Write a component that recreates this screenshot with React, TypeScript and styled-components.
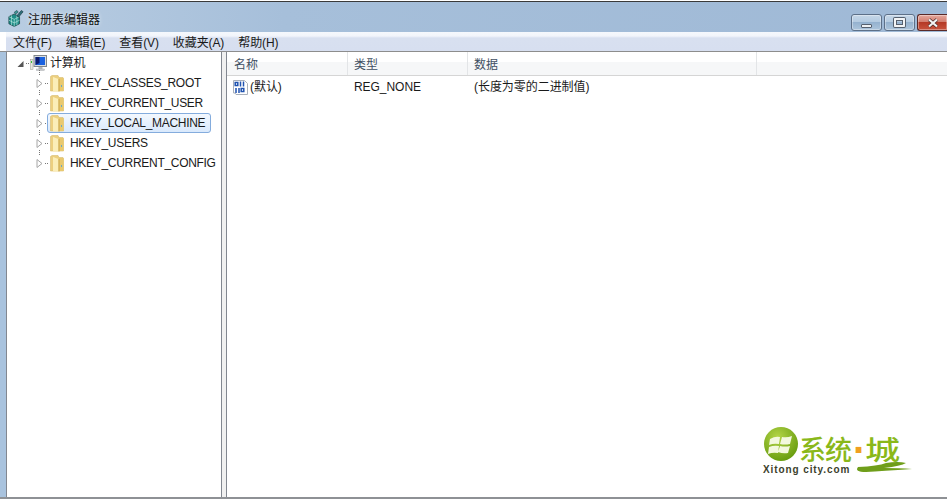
import React from 'react';
import styled, { createGlobalStyle } from 'styled-components';

const Global = createGlobalStyle`
  html, body { margin: 0; padding: 0; background: #fff; overflow: hidden; }
  * { box-sizing: border-box; }
`;

const fontStack = `"Liberation Sans", "Noto Sans CJK SC", sans-serif`;

const Win = styled.div`
  width: 947px;
  height: 499px;
  display: flex;
  flex-direction: column;
  font-family: ${fontStack};
  font-size: 12px;
  color: #1a1a1a;
  background: #fff;
`;

const TitleBar = styled.div`
  height: 31px;
  flex: none;
  padding: 2px 0 0 8px;
  display: flex;
  align-items: center;
  background: linear-gradient(90deg, #b9cde2 0, #a6bfda 30%, #9fb9d6 100%);
  border-top: 1px solid #3a3a3a;
  margin-top: 1px;
`;

const AppTitle = styled.span`
  margin-left: 4px;
  font-size: 12px;
  color: #111;
  text-shadow: 0 0 4px rgba(255, 255, 255, 0.8);
`;

const Buttons = styled.div`
  margin-left: auto;
  display: flex;
  gap: 2px;
  align-self: flex-start;
  margin-top: 10px;
`;

const CapBtn = styled.div<{ $w: number; $close?: boolean }>`
  width: ${p => p.$w}px;
  height: 17px;
  border: 1px solid ${p => (p.$close ? '#5a2a28' : '#5d7088')};
  border-radius: 3px;
  ${p => (p.$close ? 'border-right: none; border-radius: 3px 0 0 3px;' : '')}
  display: flex;
  align-items: center;
  justify-content: center;
  background: ${p =>
    p.$close
      ? 'linear-gradient(180deg, #e5a99e 0, #d37e6f 45%, #b53a26 50%, #c8533d 100%)'
      : 'linear-gradient(180deg, #c6d7e8 0, #b4cbe1 45%, #95b2cf 50%, #adc5dc 100%)'};
  box-shadow: inset 0 0 0 1px rgba(255, 255, 255, 0.35);
`;

const MinGlyph = styled.div`
  width: 11px;
  height: 4px;
  margin-top: 6px;
  background: #eef1f4;
  border: 1px solid #56606e;
  border-radius: 1px;
`;

const MaxGlyph = styled.div`
  width: 11px;
  height: 9px;
  border: 2px solid #f2f4f6;
  outline: 1px solid #56606e;
  outline-offset: -3px;
  box-shadow: 0 0 0 1px #56606e;
  border-radius: 1px;
`;

const MenuBar = styled.div`
  height: 19px;
  flex: none;
  margin-left: 6px;
  padding-left: 7px;
  display: flex;
  align-items: center;
  gap: 14px;
  font-size: 12px;
  background: linear-gradient(180deg, #f5f8fd 0, #f2f5fb 4px, #d8e0f0 6px, #d7dff0 100%);
`;

const MenuItem = styled.span`
  white-space: nowrap;
  letter-spacing: -0.1px;
`;

const Body = styled.div`
  flex: 1;
  display: flex;
  padding-left: 6px;
  border-top: 1px solid #8d8d8d;
  background: #a9c3de;
  min-height: 0;
`;

const TreePane = styled.div`
  width: 216px;
  flex: none;
  background: #fff;
  border-left: 1px solid #828790;
  border-right: 1px solid #828790;
  padding-top: 1px;
  display: flex;
  flex-direction: column;
  overflow: hidden;
`;

const Splitter = styled.div`
  width: 4px;
  flex: none;
  background: #f0f0f0;
`;

const ListPane = styled.div`
  flex: 1;
  background: #fff;
  border-left: 1px solid #828790;
  display: flex;
  flex-direction: column;
`;

const TreeRow = styled.div<{ $indent: number }>`
  height: 20px;
  flex: none;
  position: relative;
  display: flex;
  align-items: center;
  padding-left: ${p => p.$indent}px;
  white-space: nowrap;
  line-height: 20px;
`;

const Arrow = styled.svg`
  width: 7px;
  height: 9px;
  flex: none;
`;

const HDots = styled.div<{ $w: number }>`
  width: ${p => p.$w}px;
  height: 1px;
  margin: 0 1px 0 2px;
  flex: none;
  background: repeating-linear-gradient(90deg, #777 0 1px, transparent 1px 2px);
`;

const VDots = styled.div`
  position: absolute;
  left: 32px;
  top: -3px;
  width: 1px;
  height: 6px;
  background: repeating-linear-gradient(180deg, #777 0 1px, transparent 1px 2px);
`;

const RowLabel = styled.span<{ $gap: number }>`
  margin-left: ${p => p.$gap}px;
  letter-spacing: -0.3px;
`;

const SelBox = styled.div`
  display: flex;
  align-items: center;
  height: 20px;
  width: 164px;
  margin-left: -3px;
  padding-left: 2px;
  flex: none;
  border: 1px solid #84acdd;
  border-radius: 3px;
  background: linear-gradient(180deg, #f3f8fe 0, #d9e9fc 100%);
`;

const Header = styled.div`
  height: 24px;
  flex: none;
  display: flex;
  border-bottom: 1px solid #d5d5d5;
  background: linear-gradient(180deg, #fff 0, #fff 10px, #f6f7f8 10px, #f6f7f8 100%);
`;

const HeaderCell = styled.div<{ $w?: number; $pad: number }>`
  width: ${p => (p.$w ? `${p.$w}px` : 'auto')};
  flex: ${p => (p.$w ? 'none' : '1')};
  padding-left: ${p => p.$pad}px;
  padding-top: 2px;
  line-height: 23px;
  border-right: ${p => (p.$w ? '1px solid #e3e5e7' : 'none')};
  color: #3f4f63;
  font-size: 12px;
`;

const ListRow = styled.div`
  height: 23px;
  display: flex;
  align-items: center;
  font-size: 12px;
  line-height: 23px;
`;

const Cell = styled.div<{ $w: number; $pad: number }>`
  width: ${p => p.$w}px;
  flex: none;
  display: flex;
  align-items: center;
  padding-left: ${p => p.$pad}px;
  white-space: nowrap;
  letter-spacing: -0.05px;
`;

const NameText = styled.span`
  margin-left: 2px;
`;

const BottomEdge = styled.div`
  height: 2px;
  flex: none;
  background: #8e9195;
`;

const Content = styled.div`
  flex: 1;
  position: relative;
`;

const Mark = styled.div`
  position: absolute;
  left: 536px;
  top: 351px;
  width: 152px;
  height: 50px;
`;

const MarkHan = styled.span`
  position: absolute;
  left: 36px;
  top: 9px;
  font-family: "Noto Sans CJK SC", sans-serif;
  font-size: 27px;
  font-weight: 500;
  line-height: 26px;
  letter-spacing: -1px;
  color: #8ab81a;
  white-space: nowrap;
`;

const MarkDot = styled.span`
  font-family: "Liberation Sans", sans-serif;
  font-size: 40px;
  font-weight: 700;
  line-height: 0;
  vertical-align: -4px;
  color: #f0a020;
  margin-left: 2px;
`;

const MarkCity = styled.span`
  display: inline-block;
  transform: scaleX(1.3);
  transform-origin: left center;
`;

const MarkLatin = styled.span`
  position: absolute;
  left: 0;
  top: 37px;
  font-family: "Liberation Sans", sans-serif;
  font-size: 10px;
  font-weight: 700;
  line-height: 11px;
  letter-spacing: 0.9px;
  color: #3c3f2c;
  white-space: nowrap;
`;

const MarkLogo = styled.svg`
  position: absolute;
  left: 0;
  top: 0;
`;

const TreeArrow = ({ open }: { open?: boolean }) =>
  open ? (
    <Arrow viewBox="0 0 7 9">
      <path d="M6.5 2v6H.5z" fill="#555" />
    </Arrow>
  ) : (
    <Arrow viewBox="0 0 7 9">
      <path d="M1 .5l5 4-5 4z" fill="#fff" stroke="#a6a6a6" />
    </Arrow>
  );

const Folder = () => (
  <svg width="14" height="17" viewBox="0 0 14 17" style={{ flex: 'none' }}>
    <path d="M.5 1.500L2 .5h6l1 2h4l.5 1V16H.5z" fill="#eccf7f" stroke="#d8bd70" strokeWidth=".6" />
    <path d="M9 3h4.500v13H9z" fill="#e9c96f" />
    <path d="M3 2l5.500 2V16.500H3z" fill="#fbeeb8" />
    <path d="M8.500 4h1v12.500h-1z" fill="#c8a64c" />
    <path d="M11 10h1v2h-1z" fill="#65aacb" />
  </svg>
);

const ComputerIcon = () => (
  <svg width="17" height="16" viewBox="0 0 17 16" style={{ flex: 'none' }}>
    <rect x=".5" y="4.500" width="2.500" height="10" fill="#e6e6e0" stroke="#9a9a90" strokeWidth=".5" />
    <rect x="1" y="6" width="1" height="2" fill="#35c035" />
    <rect x="4" y=".5" width="12.500" height="11" fill="#d8dde0" stroke="#80868c" />
    <rect x="5.500" y="2" width="9.500" height="8" fill="#1a62e0" />
    <path d="M5.500 2h4v6l-4 2z" fill="#0b1a6e" />
    <rect x="8.500" y="12" width="4" height="2" fill="#b4b8bc" />
    <rect x="6.500" y="14" width="8" height="1.500" fill="#d0d3d6" stroke="#9a9da0" strokeWidth=".4" />
  </svg>
);

const RegIcon = () => (
  <svg width="15" height="15" viewBox="0 0 15 15" style={{ flex: 'none' }}>
    <path d="M.5.5h11l3 3v11H3l-1-1.500H.5z" fill="#fff" stroke="#a9b0bb" />
    <g fill="none" stroke="#1f52b0" strokeWidth="1.500">
      <rect x="2.200" y="2.500" width="2.600" height="3" />
      <path d="M7.500 1.500v5M10.500 1.500v5M3 8v5M6 8v5" />
      <rect x="8.200" y="8.500" width="2.600" height="3" />
    </g>
  </svg>
);

const RegeditIcon = () => (
  <svg width="16" height="18" viewBox="0 0 18 19" style={{ flex: 'none' }}>
    <path d="M1 8l6-3 6 3v8l-6 3-6-3z" fill="#1f8d88" stroke="#123c3f" strokeWidth=".8" />
    <path d="M1 8l6 3 6-3M7 11v8M4 6.500v11M10 6.500v11M1 12l6 3 6-3" fill="none" stroke="#bfece4" strokeWidth=".7" />
    <path d="M10 7l5-6 2 1.500-5 6z" fill="#2d6f7a" stroke="#16333a" strokeWidth=".7" />
    <path d="M7 3l3-2 1.500 2-3 2z" fill="#3c9a98" stroke="#16333a" strokeWidth=".6" />
  </svg>
);

const WatermarkLogo = () => (
  <MarkLogo width="152" height="50" viewBox="0 0 152 50">
    <defs>
      <radialGradient id="ball" cx="0.4" cy="0.3" r="0.8">
        <stop offset="0" stopColor="#b4d548" />
        <stop offset="1" stopColor="#5f9608" />
      </radialGradient>
    </defs>
    <circle cx="18" cy="17" r="17" fill="url(#ball)" />
    <path d="M7 12q5-3 10-2l-1 7q-5-1-10 1zM19 10q5 1 10-1l-2 8q-5 1-10 0zM6 20q5-2 10-1l-1 7q-5-1-10 1zM17 19q5 1 10 0l-2 7q-5 1-10-1z" fill="#f3f8de" />
    <path d="M95 40q20-1 28-4q12-2 20 0q-5 3-22 5q16 0 28 1q-30 2-46 3q-12 0-8-5z" fill="#6f9e1a" />
  </MarkLogo>
);

const keys = ['HKEY_CLASSES_ROOT', 'HKEY_CURRENT_USER', 'HKEY_LOCAL_MACHINE', 'HKEY_USERS', 'HKEY_CURRENT_CONFIG'];
const menus = ['文件(F)', '编辑(E)', '查看(V)', '收藏夹(A)', '帮助(H)'];

const App = (): JSX.Element => (
  <Win>
    <Global />
    <TitleBar>
      <RegeditIcon />
      <AppTitle>注册表编辑器</AppTitle>
      <Buttons>
        <CapBtn $w={31}><MinGlyph /></CapBtn>
        <CapBtn $w={31}><MaxGlyph /></CapBtn>
        <CapBtn $w={30} $close>
          <svg width="12" height="10" viewBox="0 0 12 10">
            <path d="M2 1.500l8 7M10 1.500l-8 7" stroke="#4a2a28" strokeWidth="3.600" />
            <path d="M2 1.500l8 7M10 1.500l-8 7" stroke="#f4f4f4" strokeWidth="2.200" />
          </svg>
        </CapBtn>
      </Buttons>
    </TitleBar>
    <MenuBar>
      {menus.map(m => (
        <MenuItem key={m}>{m}</MenuItem>
      ))}
    </MenuBar>
    <Body>
      <TreePane>
        <TreeRow $indent={10}>
          <TreeArrow open />
          <HDots $w={3} />
          <ComputerIcon />
          <RowLabel $gap={3}>计算机</RowLabel>
        </TreeRow>
        {keys.map(k => {
          const selected = k === 'HKEY_LOCAL_MACHINE';
          return (
            <TreeRow key={k} $indent={29}>
              <VDots />
              <TreeArrow />
              <HDots $w={4} />
              {selected ? (
                <SelBox>
                  <Folder />
                  <RowLabel $gap={6}>{k}</RowLabel>
                </SelBox>
              ) : (
                <>
                  <Folder />
                  <RowLabel $gap={6}>{k}</RowLabel>
                </>
              )}
            </TreeRow>
          );
        })}
      </TreePane>
      <Splitter />
      <ListPane>
        <Header>
          <HeaderCell $w={121} $pad={7}>名称</HeaderCell>
          <HeaderCell $w={120} $pad={6}>类型</HeaderCell>
          <HeaderCell $w={289} $pad={6}>数据</HeaderCell>
          <HeaderCell $pad={6} />
        </Header>
        <Content>
          <ListRow>
            <Cell $w={121} $pad={6}>
              <RegIcon />
              <NameText>(默认)</NameText>
            </Cell>
            <Cell $w={120} $pad={6}>REG_NONE</Cell>
            <Cell $w={289} $pad={6}>(长度为零的二进制值)</Cell>
          </ListRow>
          <Mark>
            <WatermarkLogo />
            <MarkHan>系统<MarkDot>·</MarkDot><MarkCity>城</MarkCity></MarkHan>
            <MarkLatin>Xitong city.com</MarkLatin>
          </Mark>
        </Content>
      </ListPane>
    </Body>
    <BottomEdge />
  </Win>
);

export default App;
